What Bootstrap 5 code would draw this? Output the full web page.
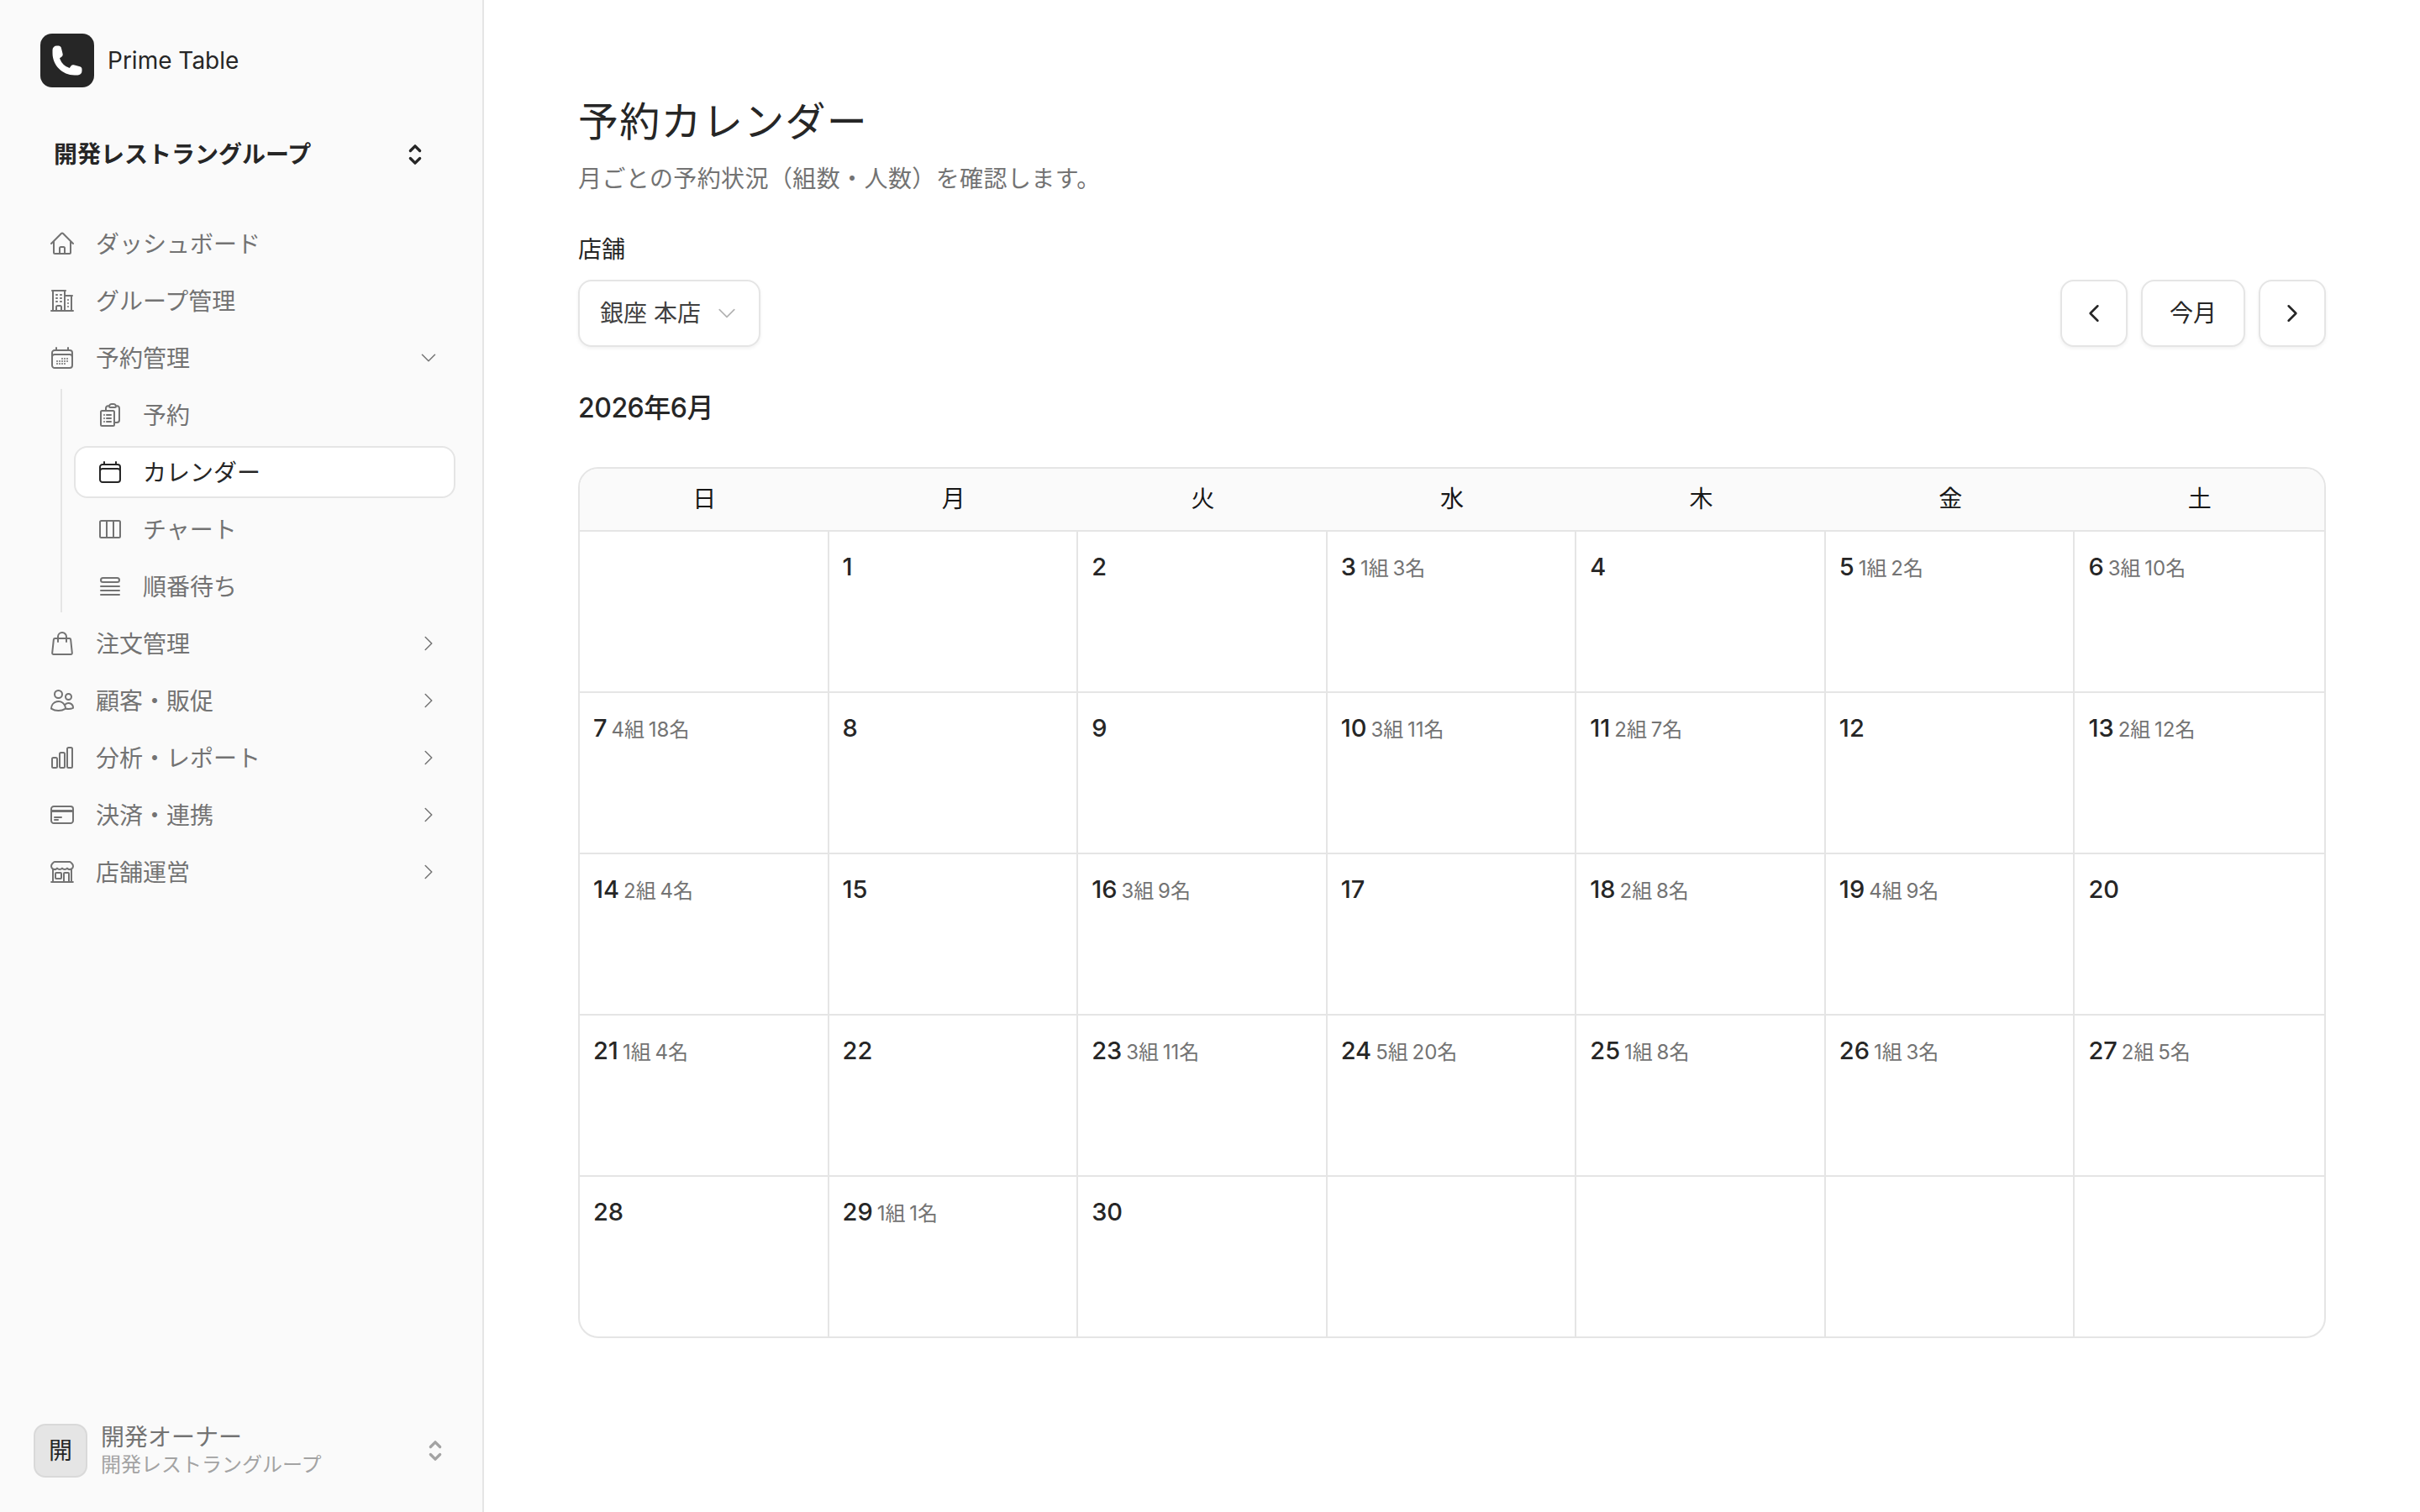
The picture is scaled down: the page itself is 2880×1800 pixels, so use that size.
<!DOCTYPE html>
<html lang="ja">
<head>
  <meta charset="UTF-8" />
  <title>予約カレンダー - Prime Table</title>
  <link href="https://cdn.jsdelivr.net/npm/bootstrap@5.3.0/dist/css/bootstrap.min.css" rel="stylesheet" />
  <style>
    body { font-family: Inter, "Noto Sans CJK JP", sans-serif; font-size: 28px; color: #262626; background: #fff; }
    svg { display: block; flex-shrink: 0; fill: none; stroke: currentColor; stroke-width: 1.5; stroke-linecap: round; stroke-linejoin: round; }

    .side { width: 576px; height: 1800px; flex-shrink: 0; background: #fafafa; border-right: 2px solid #e5e5e5; }
    .brand { padding: 40px 48px 0; gap: 16px; line-height: 64px; }
    .brand-mark { width: 64px; height: 64px; border-radius: 14px; background: #262626; color: #fff; }
    .brand-mark svg { width: 40px; height: 40px; fill: #fff; stroke: none; }
    .org { padding: 0 64px; margin-top: 48px; height: 64px; font-weight: 600; }
    .org svg { width: 36px; height: 36px; stroke-width: 2.2; margin-right: -2px; }

    .menu { margin-top: 43px; padding: 0 32px 0 58px; gap: 6px; }
    .menu-row { height: 62px; gap: 24px; color: #737373; }
    .menu-row span { padding-top: 2px; }
    .menu-row .ico { width: 32px; height: 32px; }
    .menu-row .chev { width: 24px; height: 24px; margin-left: auto; margin-right: 20px; }
    .sub-menu { margin-left: 14px; border-left: 2px solid #e5e5e5; padding-left: 14px; gap: 6px; }
    .sub-menu .menu-row { padding-left: 25px; gap: 23px; border: 2px solid transparent; border-radius: 16px; }
    .sub-menu .menu-row.on { background: #fff; border-color: #e5e5e5; color: #262626; }

    .user { padding: 0 40px; margin-top: auto; margin-bottom: 40px; gap: 16px; }
    .user-ava { width: 64px; height: 64px; border-radius: 14px; background: #e5e5e5; border: 2px solid #d9d9d9; }
    .user-name { color: #737373; line-height: 34px; }
    .user-org { color: #a3a3a3; font-size: 24px; line-height: 32px; }
    .user svg { width: 36px; height: 36px; stroke-width: 2.2; color: #a3a3a3; margin-left: auto; margin-right: -2px; }

    .page { padding: 115px 112px 0; }
    .page-title { font-size: 48px; line-height: 60px; font-weight: 400; letter-spacing: 1.3px; margin: 0; }
    .page-desc { color: #737373; line-height: 40px; letter-spacing: .4px; margin: 18px 0 0; }
    .field-label { line-height: 40px; margin: 44px 0 16px; display: block; }
    .ctl { height: 80px; border: 2px solid #e5e5e5; border-radius: 16px; background: #fff; color: #404040; font-size: 28px; box-shadow: 0 2px 4px rgba(0, 0, 0, .06); padding: 0; white-space: nowrap; }
    .ctl-select { width: 217px; padding: 0 24px; gap: 12px; }
    .ctl-select svg { width: 28px; height: 28px; color: #b3b3b3; }
    .ctl-sq { width: 80px; color: #262626; }
    .ctl-sq svg { width: 28px; height: 28px; stroke-width: 2.2; }
    .ctl-txt { width: 124px; color: #262626; }
    .month { font-size: 32px; font-weight: 500; letter-spacing: -.5px; line-height: 40px; margin: 53px 0 50px; }

    .cal { border: 2px solid #e5e5e5; border-radius: 24px; overflow: hidden; }
    .cal-head, .cal-body { display: grid; grid-template-columns: repeat(7, 1fr); }
    .cal-head { background: #fafafa; height: 73px; }
    .cal-head > div { text-align: center; line-height: 73px; color: #171717; }
    .cal-cell { height: 192px; padding: 21px 16px; border-top: 2px solid #e5e5e5; border-right: 2px solid #e5e5e5; line-height: 42px; white-space: nowrap; }
    .cal-cell:nth-child(7n) { border-right: 0; }
    .cal-num { font-weight: 500; font-size: 29px; }
    .cal-meta { color: #737373; font-size: 24px; margin-left: 5px; word-spacing: -2px; }
  </style>
</head>
<body>
  <div class="d-flex">
    <aside class="side d-flex flex-column">
      <div class="brand d-flex align-items-center">
        <div class="brand-mark d-flex align-items-center justify-content-center">
          <svg viewBox="0 0 24 24"><path d="M1.5 4.5a3 3 0 0 1 3-3h1.372c.86 0 1.61.586 1.819 1.42l1.105 4.423a1.875 1.875 0 0 1-.694 1.955l-1.293.97c-.135.101-.164.249-.126.352a11.285 11.285 0 0 0 6.697 6.697c.103.038.25.009.352-.126l.97-1.293a1.875 1.875 0 0 1 1.955-.694l4.423 1.105c.834.209 1.42.959 1.42 1.82V19.5a3 3 0 0 1-3 3h-2.25C8.552 22.5 1.5 15.448 1.5 6.75V4.5Z"/></svg>
        </div>
        <span>Prime Table</span>
      </div>

      <div class="org d-flex align-items-center justify-content-between">
        <span>開発レストラングループ</span>
        <svg viewBox="0 0 24 24"><path d="M8.25 15 12 18.75 15.75 15m-7.5-6L12 5.25 15.75 9"/></svg>
      </div>

      <nav class="menu d-flex flex-column">
        <div class="menu-row d-flex align-items-center">
          <svg class="ico" viewBox="0 0 24 24"><path d="m2.25 12 8.954-8.955c.44-.439 1.152-.439 1.591 0L21.75 12M4.5 9.75v10.125c0 .621.504 1.125 1.125 1.125H9.75v-4.875c0-.621.504-1.125 1.125-1.125h2.25c.621 0 1.125.504 1.125 1.125V21h4.125c.621 0 1.125-.504 1.125-1.125V9.75M8.25 21h8.25"/></svg>
          <span>ダッシュボード</span>
        </div>
        <div class="menu-row d-flex align-items-center">
          <svg class="ico" viewBox="0 0 24 24"><path d="M2.25 21h19.5m-18-18v18m10.5-18v18m6-13.5V21M6.75 6.75h.75m-.75 3h.75m-.75 3h.75m3-6h.75m-.75 3h.75m-.75 3h.75M6.75 21v-3.375c0-.621.504-1.125 1.125-1.125h2.25c.621 0 1.125.504 1.125 1.125V21M3 3h12m-.75 4.5H21m-3.75 3.75h.008v.008h-.008v-.008Zm0 3h.008v.008h-.008v-.008Zm0 3h.008v.008h-.008v-.008Z"/></svg>
          <span>グループ管理</span>
        </div>
        <div class="menu-row d-flex align-items-center">
          <svg class="ico" viewBox="0 0 24 24"><path d="M6.75 3v2.25M17.25 3v2.25M3 18.75V7.5a2.25 2.25 0 0 1 2.25-2.25h13.5A2.25 2.25 0 0 1 21 7.5v11.25m-18 0A2.25 2.25 0 0 0 5.25 21h13.5A2.25 2.25 0 0 0 21 18.75m-18 0v-7.5A2.25 2.25 0 0 1 5.25 9h13.5A2.25 2.25 0 0 1 21 11.25v7.5m-9-6h.008v.008H12v-.008ZM12 15h.008v.008H12V15Zm0 2.25h.008v.008H12v-.008ZM9.75 15h.008v.008H9.75V15Zm0 2.25h.008v.008H9.75v-.008ZM7.5 15h.008v.008H7.5V15Zm0 2.25h.008v.008H7.5v-.008Zm6.75-4.5h.008v.008h-.008v-.008Zm0 2.25h.008v.008h-.008V15Zm0 2.25h.008v.008h-.008v-.008Zm2.25-4.5h.008v.008H16.5v-.008Zm0 2.25h.008v.008H16.5V15Z"/></svg>
          <span>予約管理</span>
          <svg class="chev" viewBox="0 0 24 24"><path d="m19.5 8.25-7.5 7.5-7.5-7.5"/></svg>
        </div>
        <div class="sub-menu d-flex flex-column">
          <div class="menu-row d-flex align-items-center">
            <svg class="ico" viewBox="0 0 24 24"><path d="M9 12h3.75M9 15h3.75M9 18h3.75m3 .75H18a2.25 2.25 0 0 0 2.25-2.25V6.108c0-1.125-.845-2.098-1.976-2.192a48.424 48.424 0 0 0-1.123-.08m-5.801 0c-.065.21-.1.433-.1.664 0 .414.336.75.75.75h4.5a.75.75 0 0 0 .75-.75 2.25 2.25 0 0 0-.1-.664m-5.8 0A2.251 2.251 0 0 1 13.5 2.25H15c1.012 0 1.867.668 2.15 1.586m-5.8 0c-.376.023-.75.05-1.124.08C9.095 4.01 8.25 4.973 8.25 6.108V8.25m0 0H4.875c-.621 0-1.125.504-1.125 1.125v11.25c0 .621.504 1.125 1.125 1.125h9.75c.621 0 1.125-.504 1.125-1.125V9.375c0-.621-.504-1.125-1.125-1.125H8.25ZM6.75 12h.008v.008H6.75V12Zm0 3h.008v.008H6.75V15Zm0 3h.008v.008H6.75V18Z"/></svg>
            <span>予約</span>
          </div>
          <div class="menu-row on d-flex align-items-center">
            <svg class="ico" viewBox="0 0 24 24"><path d="M6.75 3v2.25M17.25 3v2.25M3 18.75V7.5a2.25 2.25 0 0 1 2.25-2.25h13.5A2.25 2.25 0 0 1 21 7.5v11.25m-18 0A2.25 2.25 0 0 0 5.25 21h13.5A2.25 2.25 0 0 0 21 18.75m-18 0v-7.5A2.25 2.25 0 0 1 5.25 9h13.5A2.25 2.25 0 0 1 21 11.25v7.5"/></svg>
            <span>カレンダー</span>
          </div>
          <div class="menu-row d-flex align-items-center">
            <svg class="ico" viewBox="0 0 24 24"><path d="M9 4.5v15m6-15v15m-10.875 0h15.75c.621 0 1.125-.504 1.125-1.125V5.625c0-.621-.504-1.125-1.125-1.125H4.125C3.504 4.5 3 5.004 3 5.625v12.75c0 .621.504 1.125 1.125 1.125Z"/></svg>
            <span>チャート</span>
          </div>
          <div class="menu-row d-flex align-items-center">
            <svg class="ico" viewBox="0 0 24 24"><path d="M3.75 12h16.5m-16.5 3.75h16.5m-16.5 3.75h16.5M5.625 4.5h12.75a1.875 1.875 0 0 1 0 3.75H5.625a1.875 1.875 0 0 1 0-3.75Z"/></svg>
            <span>順番待ち</span>
          </div>
        </div>
        <div class="menu-row d-flex align-items-center">
          <svg class="ico" viewBox="0 0 24 24"><path d="M15.75 10.5V6a3.75 3.75 0 1 0-7.5 0v4.5m11.356-1.993 1.263 12c.07.665-.45 1.243-1.119 1.243H4.25a1.125 1.125 0 0 1-1.12-1.243l1.264-12A1.125 1.125 0 0 1 5.513 7.5h12.974c.576 0 1.059.435 1.119 1.007Z"/></svg>
          <span>注文管理</span>
          <svg class="chev" viewBox="0 0 24 24"><path d="m8.25 4.5 7.5 7.5-7.5 7.5"/></svg>
        </div>
        <div class="menu-row d-flex align-items-center">
          <svg class="ico" viewBox="0 0 24 24"><path d="M15 19.128a9.38 9.38 0 0 0 2.625.372 9.337 9.337 0 0 0 4.121-.952 4.125 4.125 0 0 0-7.533-2.493M15 19.128v-.003c0-1.113-.285-2.16-.786-3.07M15 19.128v.106A12.318 12.318 0 0 1 8.624 21c-2.331 0-4.512-.645-6.374-1.766l-.001-.109a6.375 6.375 0 0 1 11.964-3.07M12 6.375a3.375 3.375 0 1 1-6.75 0 3.375 3.375 0 0 1 6.75 0Zm8.25 2.25a2.625 2.625 0 1 1-5.25 0 2.625 2.625 0 0 1 5.25 0Z"/></svg>
          <span>顧客・販促</span>
          <svg class="chev" viewBox="0 0 24 24"><path d="m8.25 4.5 7.5 7.5-7.5 7.5"/></svg>
        </div>
        <div class="menu-row d-flex align-items-center">
          <svg class="ico" viewBox="0 0 24 24"><path d="M3 13.125C3 12.504 3.504 12 4.125 12h2.25c.621 0 1.125.504 1.125 1.125v6.75C7.5 20.496 6.996 21 6.375 21h-2.25A1.125 1.125 0 0 1 3 19.875v-6.75ZM9.75 8.625c0-.621.504-1.125 1.125-1.125h2.25c.621 0 1.125.504 1.125 1.125v11.25c0 .621-.504 1.125-1.125 1.125h-2.25a1.125 1.125 0 0 1-1.125-1.125V8.625ZM16.5 4.125c0-.621.504-1.125 1.125-1.125h2.25C20.496 3 21 3.504 21 4.125v15.75c0 .621-.504 1.125-1.125 1.125h-2.25a1.125 1.125 0 0 1-1.125-1.125V4.125Z"/></svg>
          <span>分析・レポート</span>
          <svg class="chev" viewBox="0 0 24 24"><path d="m8.25 4.5 7.5 7.5-7.5 7.5"/></svg>
        </div>
        <div class="menu-row d-flex align-items-center">
          <svg class="ico" viewBox="0 0 24 24"><path d="M2.25 8.25h19.5M2.25 9h19.5m-16.5 5.25h6m-6 2.25h3m-3.75 3h15a2.25 2.25 0 0 0 2.25-2.25V6.75A2.25 2.25 0 0 0 19.5 4.5h-15a2.25 2.25 0 0 0-2.25 2.25v10.5A2.25 2.25 0 0 0 4.5 19.5Z"/></svg>
          <span>決済・連携</span>
          <svg class="chev" viewBox="0 0 24 24"><path d="m8.25 4.5 7.5 7.5-7.5 7.5"/></svg>
        </div>
        <div class="menu-row d-flex align-items-center">
          <svg class="ico" viewBox="0 0 24 24"><path d="M13.5 21v-7.5a.75.75 0 0 1 .75-.75h3a.75.75 0 0 1 .75.75V21m-4.5 0H2.36m11.14 0H18m0 0h3.64m-1.39 0V9.349M3.75 21V9.349m0 0a3.001 3.001 0 0 0 3.75-.615A2.993 2.993 0 0 0 9.75 9.75c.896 0 1.7-.393 2.25-1.016a2.993 2.993 0 0 0 2.25 1.016c.896 0 1.7-.393 2.25-1.016a3.001 3.001 0 0 0 3.75.614m-16.5 0a3.004 3.004 0 0 1-.621-4.72l1.189-1.19A1.5 1.5 0 0 1 5.378 3h13.243a1.5 1.5 0 0 1 1.06.44l1.19 1.189a3 3 0 0 1-.621 4.72M6.75 18h3.75a.75.75 0 0 0 .75-.75V13.5a.75.75 0 0 0-.75-.75H6.75a.75.75 0 0 0-.75.75v3.75c0 .414.336.75.75.75Z"/></svg>
          <span>店舗運営</span>
          <svg class="chev" viewBox="0 0 24 24"><path d="m8.25 4.5 7.5 7.5-7.5 7.5"/></svg>
        </div>
      </nav>

      <div class="user d-flex align-items-center">
        <div class="user-ava d-flex align-items-center justify-content-center">開</div>
        <div>
          <div class="user-name">開発オーナー</div>
          <div class="user-org">開発レストラングループ</div>
        </div>
        <svg viewBox="0 0 24 24"><path d="M8.25 15 12 18.75 15.75 15m-7.5-6L12 5.25 15.75 9"/></svg>
      </div>
    </aside>

    <main class="page flex-grow-1">
      <h1 class="page-title">予約カレンダー</h1>
      <p class="page-desc">月ごとの予約状況（組数・人数）を確認します。</p>

      <label class="field-label">店舗</label>
      <div class="d-flex justify-content-between">
        <button class="ctl ctl-select d-flex align-items-center justify-content-between" type="button">
          <span>銀座 本店</span>
          <svg viewBox="0 0 24 24"><path d="m19.5 8.25-7.5 7.5-7.5-7.5"/></svg>
        </button>
        <div class="d-flex gap-3">
          <button class="ctl ctl-sq d-flex align-items-center justify-content-center" type="button"><svg viewBox="0 0 24 24"><path d="M15.75 19.5 8.25 12l7.5-7.5"/></svg></button>
          <button class="ctl ctl-txt" type="button">今月</button>
          <button class="ctl ctl-sq d-flex align-items-center justify-content-center" type="button"><svg viewBox="0 0 24 24"><path d="m8.25 4.5 7.5 7.5-7.5 7.5"/></svg></button>
        </div>
      </div>

      <h2 class="month">2026年6月</h2>

      <div class="cal">
        <div class="cal-head">
          <div>日</div><div>月</div><div>火</div><div>水</div><div>木</div><div>金</div><div>土</div>
        </div>
        <div class="cal-body" id="calBody"></div>
      </div>
    </main>
  </div>

  <script src="https://cdn.jsdelivr.net/npm/bootstrap@5.3.0/dist/js/bootstrap.bundle.min.js"></script>
  <script>
    // 日付ごとの予約 [組, 名]
    const reservas = {
      3: [1, 3], 5: [1, 2], 6: [3, 10], 7: [4, 18], 10: [3, 11], 11: [2, 7], 13: [2, 12],
      14: [2, 4], 16: [3, 9], 18: [2, 8], 19: [4, 9], 21: [1, 4], 23: [3, 11], 24: [5, 20],
      25: [1, 8], 26: [1, 3], 27: [2, 5], 29: [1, 1]
    };
    const calBody = document.getElementById("calBody");
    for (let dia = 0; dia < 35; dia++) {
      if (dia < 1 || dia > 30) {
        calBody.innerHTML += `<div class="cal-cell"></div>`;
        continue;
      }
      const r = reservas[dia];
      calBody.innerHTML += `<div class="cal-cell"><span class="cal-num">${dia}</span>${r ? `<span class="cal-meta">${r[0]}組 ${r[1]}名</span>` : ""}</div>`;
    }
  </script>
</body>
</html>
